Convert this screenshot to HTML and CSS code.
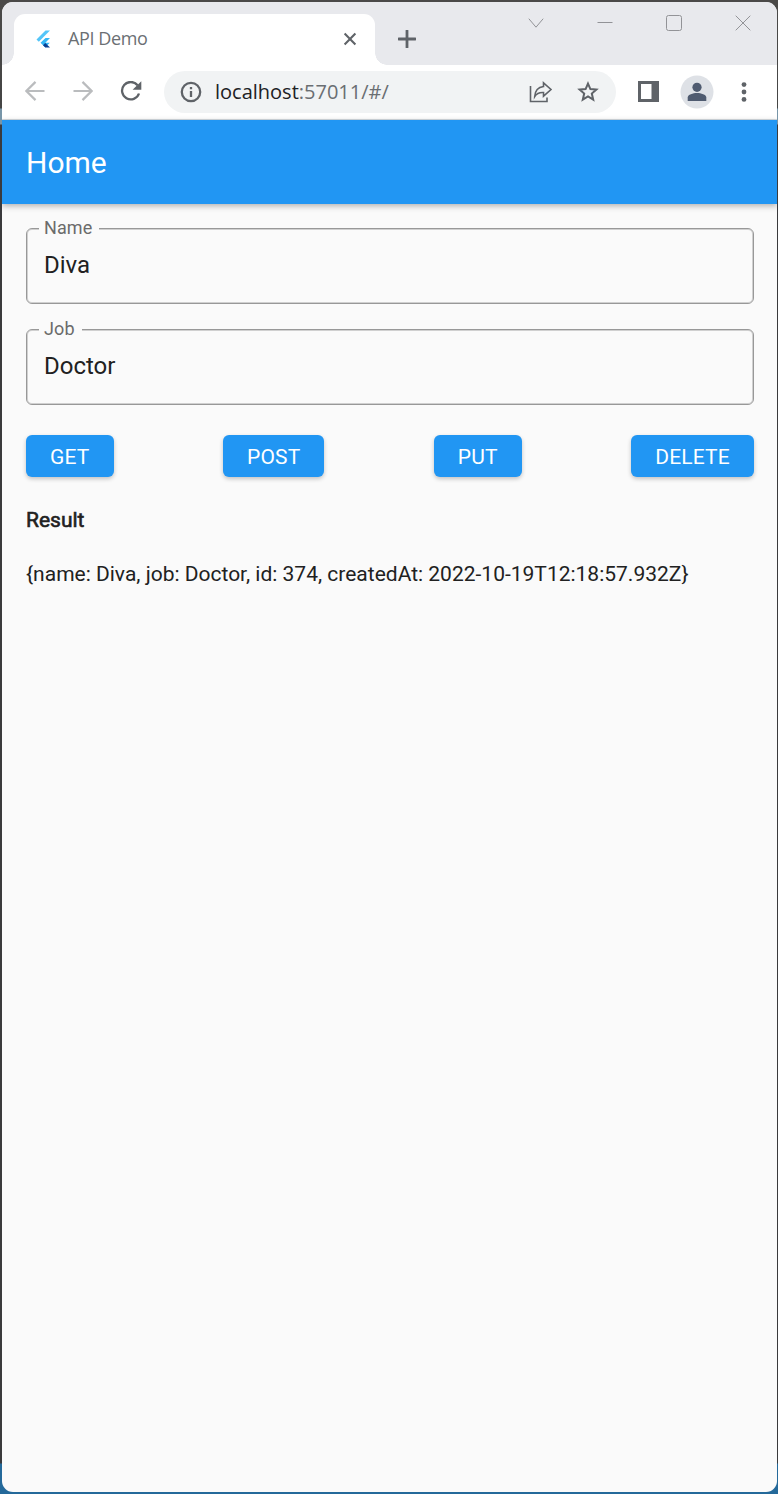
FILE: index.html
```html
<!DOCTYPE html>
<html lang="en">
<head>
<meta charset="utf-8">
<title>API Demo</title>
<link rel="stylesheet" href="styles.css">
</head>
<body>
<div class="desktop">
  <div class="window">
    <div class="tabstrip">
      <div class="tab">
        <svg class="favicon" width="14" height="18" viewBox="0 0 14 18"><path d="M0.5 9.5 9.5 0.5H14L2.8 11.8z" fill="#54c5f8"/><path d="M14 8H9.5L4.5 12.8 9.3 17.5 13.8 12.8 9.3 12.8z" fill="#35b7f5"/><path d="M7 15.2 9.3 12.9 14 17.5H9.3z" fill="#0a3f94"/></svg>
        <span class="tab-title">API Demo</span>
        <svg class="tab-close" width="14" height="14" viewBox="0 0 14 14"><path d="M1.6 1.6 12.4 12.4M12.4 1.6 1.6 12.4" stroke="#5f6368" stroke-width="2.1"/></svg>
      </div>
      <svg class="new-tab" width="18" height="18" viewBox="0 0 18 18"><path d="M9 0.7V17.3M.7 9H17.3" stroke="#5f6368" stroke-width="2.8" stroke-linecap="round"/></svg>
      <div class="controls">
        <svg width="16" height="16" viewBox="0 0 16 16"><path d="M.8 3.7 8 12.2 15.2 3.7"/></svg>
        <svg width="16" height="16" viewBox="0 0 16 16"><path d="M.5 7.5H15.5"/></svg>
        <svg width="16" height="16" viewBox="0 0 16 16"><rect x=".5" y=".5" width="15" height="15" rx="2"/></svg>
        <svg width="16" height="16" viewBox="0 0 16 16"><path d="M.7 .7 15.3 15.3M15.3 .7 .7 15.3"/></svg>
      </div>
    </div>
    <div class="toolbar">
      <div class="nav">
        <svg width="20" height="20" viewBox="0 0 20 20" fill="none" stroke="#babcbe" stroke-width="2.2"><path d="M19.5 10H1.5M10.5 .9 1.4 10 10.5 19.1"/></svg>
        <svg width="20" height="20" viewBox="0 0 20 20" fill="none" stroke="#babcbe" stroke-width="2.2"><path d="M.5 10H18.5M9.5 .9 18.6 10 9.5 19.1"/></svg>
        <svg width="22" height="20" viewBox="0 0 22 20"><path d="M17.6 4.3A8.7 8.7 0 1 0 19 12.5" fill="none" stroke="#5f6368" stroke-width="2.3"/><path d="M21.3 .2V8.7H12.6z" fill="#5f6368"/></svg>
      </div>
      <div class="address">
        <svg class="info" width="22" height="22" viewBox="0 0 22 22"><circle cx="11" cy="11" r="9.2" fill="none" stroke="#5f6368" stroke-width="2.3"/><path d="M11 10V16M11 6V8.2" stroke="#5f6368" stroke-width="2.3"/></svg>
        <span class="url">localhost<span class="url-rest">:57011/#/</span></span>
        <svg class="share" width="24" height="22" viewBox="0 0 24 22" fill="none" stroke="#5f6368" stroke-width="1.6"><path d="M1.5 5V20.5H18V16.5"/><path d="M14.5 1.8 22 8.5 14.5 15.2V11.6C10 11.3 7.6 12.6 5.7 15.6 6 10.3 9 6.2 14.5 5.5z"/></svg>
        <svg class="star" width="22" height="21" viewBox="0 0 22 21" fill="none" stroke="#5f6368" stroke-width="2"><path d="M11 2.6 13.4 8.1 19.4 8.6 14.8 12.6 16.2 18.6 11 15.4 5.8 18.6 7.2 12.6 2.6 8.6 8.6 8.1z"/></svg>
      </div>
      <svg class="panel" width="21" height="21" viewBox="0 0 21 21"><path fill="#5f6368" fill-rule="evenodd" d="M0 0H21V21H0zM3 3V18H13.5V3z"/></svg>
      <svg class="avatar" width="34" height="34" viewBox="0 0 34 34"><circle cx="17" cy="17" r="16.5" fill="#dee1e6"/><circle cx="17" cy="12.3" r="4.6" fill="#4f5b70"/><path d="M7.7 26V22.6C7.7 19.5 13 18 17 18S26.3 19.5 26.3 22.6V26z" fill="#4f5b70"/></svg>
      <svg class="more" width="6" height="20" viewBox="0 0 6 20" fill="#5f6368"><circle cx="3" cy="2.6" r="2.4"/><circle cx="3" cy="10" r="2.4"/><circle cx="3" cy="17.4" r="2.4"/></svg>
    </div>
    <header class="appbar"><h1 class="appbar-title">Home</h1></header>
    <main class="content">
      <div class="field"><span class="label">Name</span><span class="value">Diva</span></div>
      <div class="field"><span class="label">Job</span><span class="value">Doctor</span></div>
      <div class="actions">
        <button class="btn">GET</button><button class="btn">POST</button><button class="btn">PUT</button><button class="btn">DELETE</button>
      </div>
      <h2 class="result-title">Result</h2>
      <p class="result">{name: Diva, job: Doctor, id: 374, createdAt: 2022-10-19T12:18:57.932Z}</p>
    </main>
  </div>
</div>
</body>
</html>
```
FILE: styles.css
```css
* { box-sizing: border-box; }
body { margin: 0; font-family: Roboto, sans-serif; }
svg { display: block; flex: none; }
.desktop {
  height: 1494px;
  padding: 2px 1px 2px 2px;
  background: linear-gradient(#4a4948 0, #454545 108px, #7795a8 109px, #7795a8 124px, #3a3a3c 125px, #3a3a3c 1463px, #24699a 1464px);
}
.window {
  height: 1490px;
  border-radius: 11px;
  overflow: hidden;
  background: #fafafa;
}
.tabstrip { display: flex; height: 63px; background: #e8e9ed; }
.tab {
  position: relative;
  display: flex;
  align-items: center;
  width: 361px;
  height: 51px;
  margin: 12px 0 0 12px;
  padding: 0 18px 1px 22px;
  border-radius: 11px 11px 0 0;
  background: #fff;
}
.tab::before, .tab::after {
  content: "";
  position: absolute;
  bottom: 0;
  width: 12px;
  height: 12px;
}
.tab::before { left: -12px; background: radial-gradient(circle at 0 0, #e8e9ed 11.5px, #fff 12px); }
.tab::after { right: -12px; background: radial-gradient(circle at 100% 0, #e8e9ed 11.5px, #fff 12px); }
.favicon { margin-top: -1px; }
.tab-title { margin: -2px 0 0 18px; font: 18px "Open Sans", sans-serif; letter-spacing: -.4px; color: #6b6f73; }
.tab-close { margin-left: auto; }
.new-tab { margin: 28px 0 0 23px; }
.controls { display: flex; gap: 53px; margin: 13px 26px 0 auto; }
.controls svg { fill: none; stroke: #929397; stroke-width: 1; }
.toolbar {
  display: flex;
  align-items: center;
  height: 55px;
  border-bottom: 1px solid #d5dbe0;
  padding: 0 30px 1px 23px;
  background: #fff;
}
.nav { display: flex; gap: 28px; margin-top: -1px; }
.nav svg:last-child { margin-left: -1px; }
.address {
  display: flex;
  align-items: center;
  width: 452px;
  height: 42px;
  margin-left: 22px;
  padding: 0 17px 0 16px;
  border-radius: 21px;
  background: #f1f3f4;
}
.url { margin-left: 13px; font: 20px "Open Sans", sans-serif; color: #202124; }
.url-rest { color: #6a6e72; }
.share { margin-left: auto; }
.star { margin-left: 24px; }
.panel { margin-left: 22px; }
.avatar { margin-left: 21px; }
.more { margin-left: auto; }
.appbar {
  position: relative;
  display: flex;
  align-items: center;
  height: 84px;
  padding: 1px 24px 0;
  background: #2196f3;
  box-shadow: 0 2px 6px rgba(0, 0, 0, .3);
}
.appbar-title { margin: 0; font-size: 30px; font-weight: 400; color: #fff; }
.content { padding: 24px 23px 0 24px; color: #212121; }
.field {
  position: relative;
  height: 76px;
  margin-bottom: 25px;
  padding: 22px 17px;
  border: 1px solid #989898;
  border-radius: 6px;
  box-shadow: inset 0 0 0 1px #d0d0d0;
}
.label {
  position: absolute;
  top: -12px;
  left: 12px;
  padding: 0 7px 2px 5px;
  background: #fafafa;
  font-size: 18px;
  line-height: 21px;
  letter-spacing: .1px;
  color: #6b6b6b;
}
.value { display: block; font-size: 24px; line-height: 28px; }
.actions { display: flex; justify-content: space-between; padding-top: 5px; }
.btn {
  height: 42px;
  padding: 2px 24px 0;
  border: 0;
  border-radius: 6px;
  background: #2196f3;
  color: #fff;
  font: 21px Roboto, sans-serif;
  letter-spacing: .2px;
  box-shadow: 0 2px 4px rgba(0, 0, 0, .22);
}
.result-title { margin: 31px 0 0; font-size: 21px; font-weight: 400; line-height: 25px; -webkit-text-stroke: .6px #212121; }
.result { margin: 29px 0 0; font-size: 21px; line-height: 25px; white-space: nowrap; }
```
